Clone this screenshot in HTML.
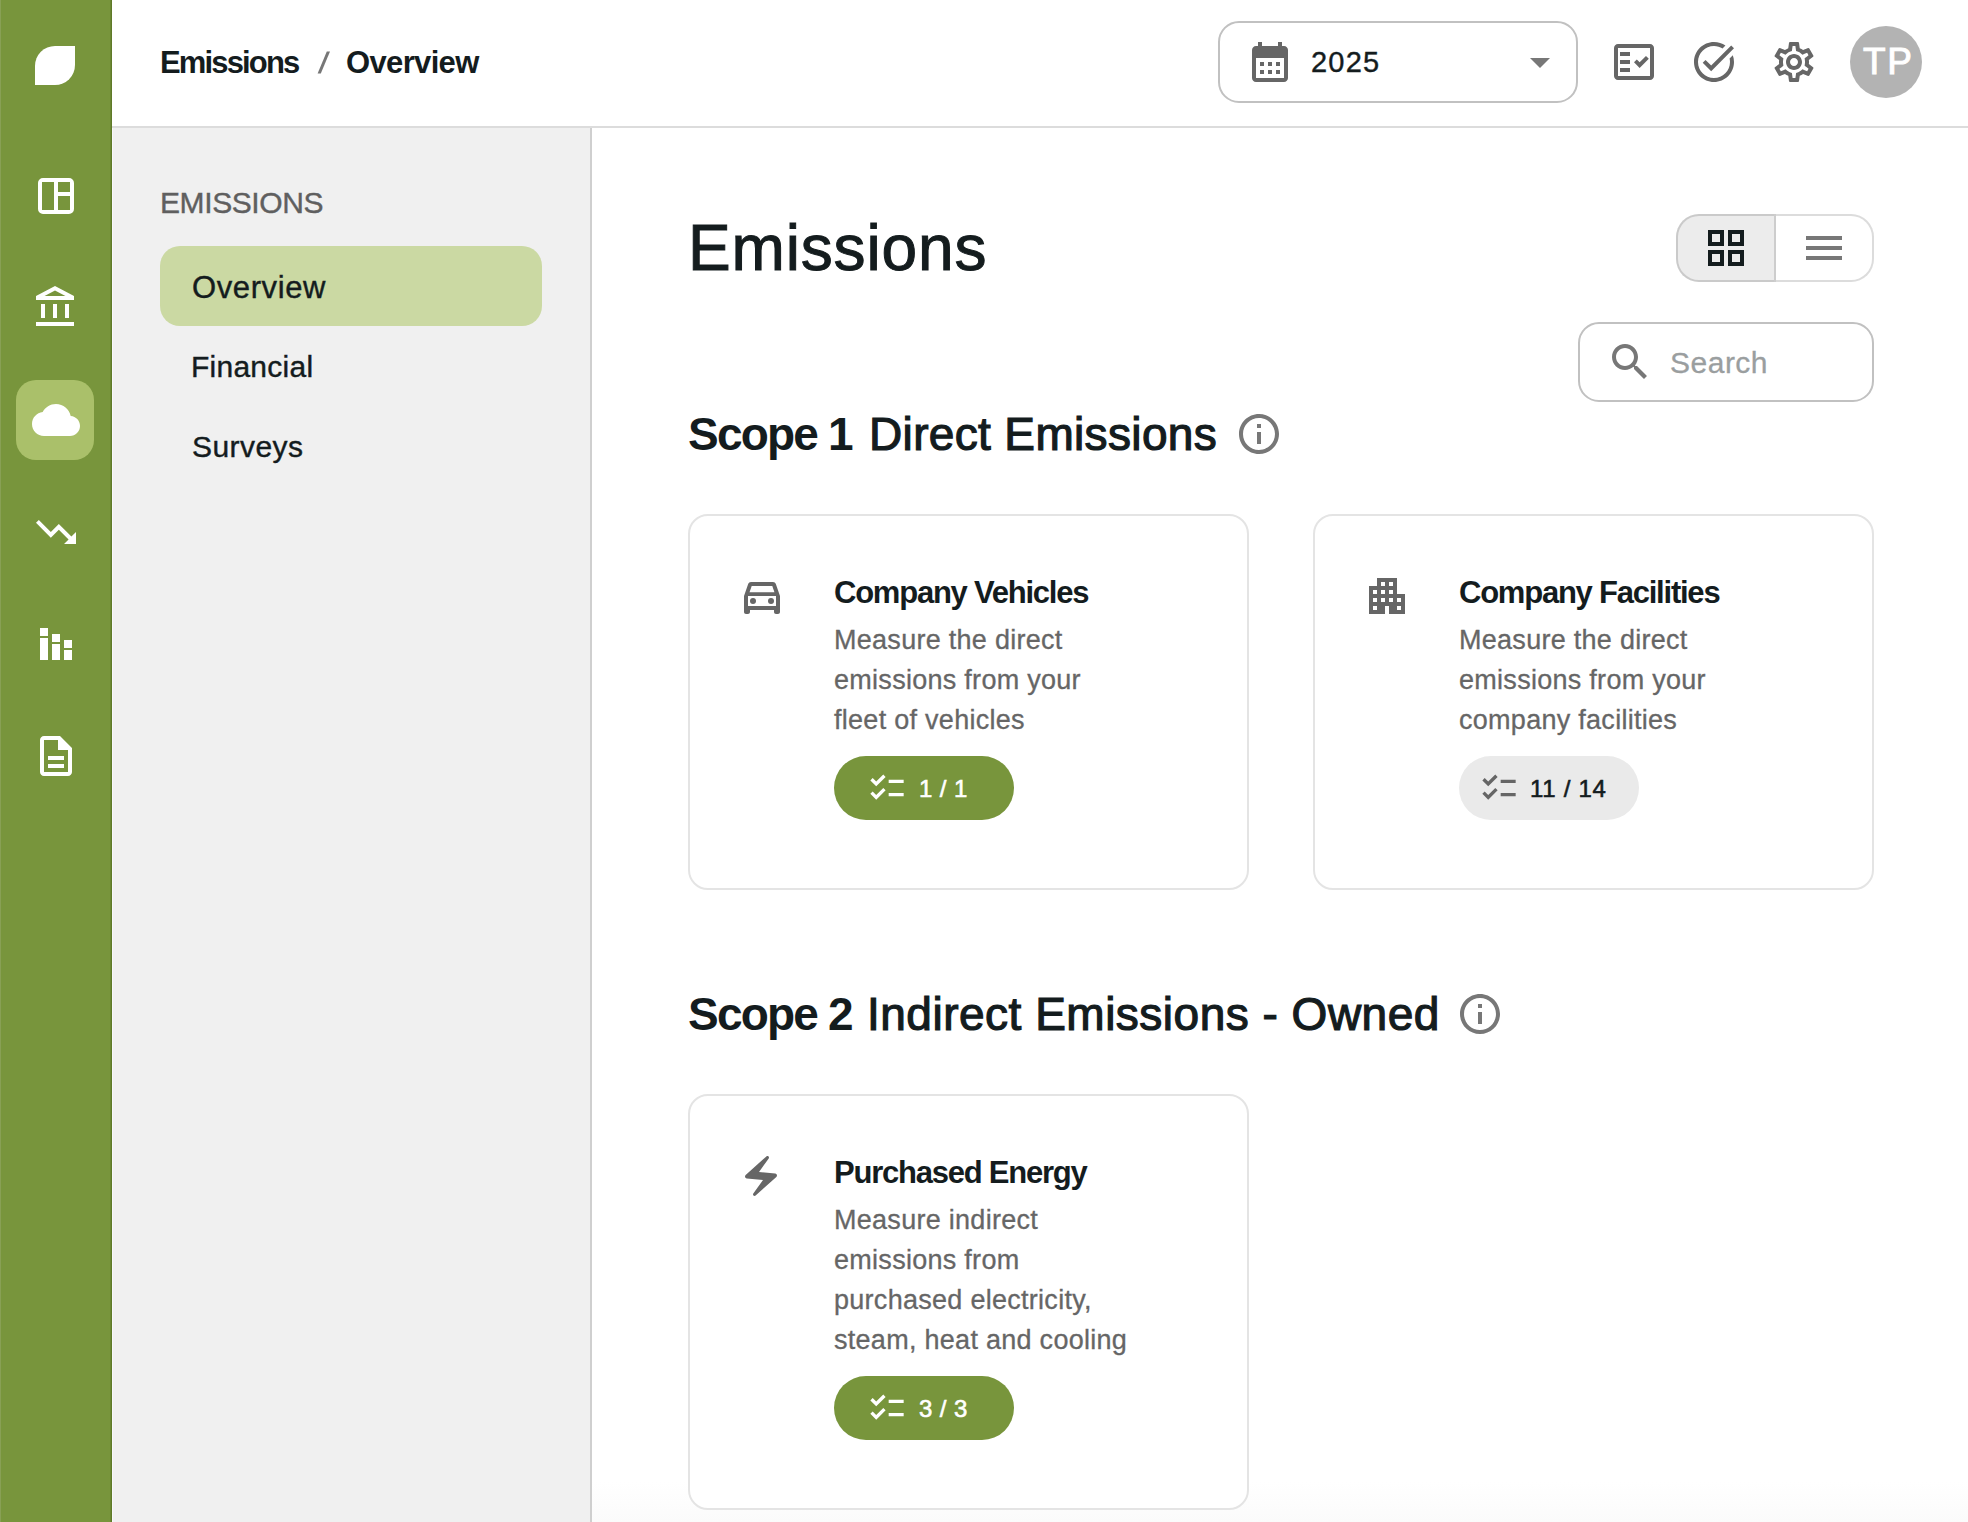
<!DOCTYPE html>
<html>
<head>
<meta charset="utf-8">
<style>
*{box-sizing:border-box;margin:0;padding:0}
html,body{width:1968px;height:1522px;overflow:hidden;background:#fff;font-family:"Liberation Sans",sans-serif;color:#141c1e}
.a{position:absolute}
.t{position:absolute;white-space:nowrap;line-height:1}
svg{position:absolute;display:block}
.rail{left:0;top:0;width:112px;height:1522px;background:#78953c}
.hdr{left:112px;top:0;width:1856px;height:128px;background:#fff;border-bottom:2px solid #dcdcdc}
.side{left:112px;top:128px;width:480px;height:1394px;background:#f0f0f0;border-right:2px solid #cfcfcf}
.card{position:absolute;width:561px;border:2px solid #e4e4e4;border-radius:20px;background:#fff}
.badge{position:absolute;width:180px;height:64px;border-radius:32px}
.g{background:#78953c}
.gr{background:#eaeaea}
</style>
</head>
<body>
<!-- left rail -->
<div class="a rail"></div>
<div class="a" style="left:0;top:0;width:1px;height:1522px;background:#88a055"></div>
<div class="a" style="left:110px;top:0;width:1px;height:1522px;background:#6c8834"></div>
<div class="a" style="left:111px;top:0;width:1px;height:1522px;background:#5f7a28"></div>
<div class="a" style="left:112px;top:128px;width:1px;height:1394px;background:#f8f8fb;z-index:1"></div>
<div class="a" style="left:35px;top:46px;width:40px;height:39px;background:#fff;border-radius:20px 0 20px 0"></div>
<!-- dashboard -->
<svg style="left:32px;top:172px" width="48" height="48" viewBox="0 0 24 24" fill="#fff"><path d="M5.5 3h13A2.5 2.5 0 0 1 21 5.5v13a2.5 2.5 0 0 1-2.5 2.5h-13A2.5 2.5 0 0 1 3 18.5v-13A2.5 2.5 0 0 1 5.5 3zM5 5v14h6V5H5zm8 0v5h6V5h-6zm0 7v7h6v-7h-6z"/></svg>
<!-- bank -->
<svg style="left:32px;top:284px" width="48" height="48" viewBox="0 0 24 24" fill="#fff"><path d="M6.5 10h-2v7h2v-7zm6 0h-2v7h2v-7zm8.5 9H2v2h19v-2zm-2.5-9h-2v7h2v-7zm-7-6.74L16.71 6H6.29l5.21-2.74m0-2.26L2 6v2h19V6l-9.5-5z"/></svg>
<!-- active cloud -->
<div class="a" style="left:16px;top:380px;width:78px;height:80px;border-radius:20px;background:#aac06a"></div>
<svg style="left:32px;top:396px" width="48" height="48" viewBox="0 0 24 24" fill="#fff"><path d="M19.35 10.04C18.67 6.59 15.64 4 12 4 9.11 4 6.6 5.64 5.35 8.04 2.34 8.36 0 10.91 0 14c0 3.31 2.69 6 6 6h13c2.76 0 5-2.240 5-5 0-2.64-2.05-4.78-4.65-4.96z"/></svg>
<!-- trending down -->
<svg style="left:32px;top:508px" width="48" height="48" viewBox="0 0 24 24" fill="#fff"><path d="M16 18l2.29-2.29-4.88-4.88-4 4L2 7.41 3.41 6l6 6 4-4 6.3 6.29L22 12v6z"/></svg>
<!-- bar chart -->
<svg style="left:0;top:600px" width="112" height="80" viewBox="0 600 112 80" fill="#fff"><path d="M40 628h8v8h-8zM40 638h8v22h-8zM52 634h8v8h-8zM52 644h8v16h-8zM64 640h8v8h-8zM64 650h8v10h-8z"/></svg>
<!-- doc -->
<svg style="left:32px;top:732px" width="48" height="48" viewBox="0 0 24 24" fill="#fff"><path d="M8 16h8v2H8zm0-4h8v2H8zm6-10H6c-1.1 0-2 .9-2 2v16c0 1.1.89 2 1.99 2H18c1.1 0 2-.9 2-2V8l-6-6zm4 18H6V4h7v5h5v11z"/></svg>

<!-- header -->
<div class="a hdr"></div>
<div class="t" id="bc1" style="left:160px;top:47px;font-size:31px;font-weight:700;letter-spacing:-1.85px">Emissions</div>
<svg style="left:310px;top:45px" width="30" height="34" viewBox="310 45 30 34" fill="#777"><path d="M317.6 73.4h3.2l9.2-22h-3.2z"/></svg>
<div class="t" id="bc2" style="left:346px;top:47px;font-size:31px;font-weight:700;letter-spacing:-0.65px">Overview</div>

<div class="a" style="left:1218px;top:21px;width:360px;height:82px;border:2px solid #c1c1c1;border-radius:21px"></div>
<svg style="left:1246px;top:38px" width="48" height="48" viewBox="0 0 24 24" fill="#666"><path d="M19 4h-1V2h-2v2H8V2H6v2H5c-1.11 0-1.99.9-1.99 2L3 20c0 1.1.89 2 2 2h14c1.1 0 2-.9 2-2V6c0-1.1-.9-2-2-2zm0 16H5V10h14v10zM9 14H7v-2h2v2zm4 0h-2v-2h2v2zm4 0h-2v-2h2v2zm-8 4H7v-2h2v2zm4 0h-2v-2h2v2zm4 0h-2v-2h2v2z"/></svg>
<div class="t" id="yr" style="left:1311px;top:48px;font-size:29px;letter-spacing:1.2px;-webkit-text-stroke-width:0.4px">2025</div>
<svg style="left:1526px;top:54px" width="28" height="18" viewBox="0 0 28 18" fill="#777"><path d="M4 4h20L14 14z"/></svg>

<svg style="left:1610px;top:38px" width="48" height="48" viewBox="0 0 24 24" fill="#666"><path d="M20,3H4C2.9,3,2,3.9,2,5v14c0,1.1,0.9,2,2,2h16c1.1,0,2-0.9,2-2V5C22,3.9,21.1,3,20,3z M20,19H4V5h16V19z"/><path d="M19.41 10.42 17.99 9 14.82 12.17 13.41 10.75 12 12.16 14.82 15z"/><path d="M5 7h5v2H5zM5 11h5v2H5zM5 15h5v2H5z"/></svg>
<svg style="left:1690px;top:38px" width="48" height="48" viewBox="0 0 24 24" fill="#666"><path d="M22,5.18L10.59,16.6l-4.24-4.24l1.41-1.41l2.83,2.83l10-10L22,5.18z M19.79,10.22C19.920,10.79,20,11.39,20,12c0,4.42-3.58,8-8,8s-8-3.58-8-8c0-4.42,3.58-8,8-8c1.58,0,3.04,0.46,4.28,1.25l1.44-1.44C16.1,2.67,14.13,2,12,2C6.48,2,2,6.48,2,12c0,5.52,4.48,10,10,10s10-4.48,10-10c0-1.19-0.22-2.33-0.6-3.39L19.79,10.22z"/></svg>
<svg style="left:1770px;top:38px" width="48" height="48" viewBox="0 0 24 24" fill="#666"><path d="M19.43 12.98c.04-.32.07-.64.07-.98 0-.34-.03-.66-.07-.98l2.11-1.65c.19-.15.24-.42.12-.64l-2-3.46c-.09-.16-.26-.25-.44-.25-.06 0-.12.01-.17.03l-2.49 1c-.52-.4-1.08-.73-1.690-.98l-.38-2.65C14.46 2.18 14.250 2 14 2h-4c-.25 0-.46.18-.49.42l-.38 2.65c-.61.25-1.17.59-1.69.98l-2.49-1c-.06-.02-.12-.03-.18-.03-.17 0-.34.09-.43.25l-2 3.46c-.13.22-.07.49.12.64l2.11 1.65c-.04.32-.07.65-.07.98 0 .33.03.66.07.98l-2.11 1.65c-.19.15-.24.42-.12.64l2 3.46c.09.16.26.25.44.25.06 0 .12-.01.17-.03l2.49-1c.52.4 1.08.73 1.69.98l.38 2.65c.03.24.24.42.49.42h4c.25 0 .46-.18.49-.42l.38-2.65c.61-.25 1.17-.59 1.69-.98l2.49 1c.06.02.12.03.18.03.17 0 .34-.09.43-.25l2-3.46c.12-.22.07-.49-.12-.64l-2.11-1.65zm-1.98-1.71c.04.31.05.52.05.73 0 .21-.02.43-.05.73l-.14 1.13.89.7 1.08.84-.7 1.21-1.27-.51-1.04-.42-.9.68c-.43.32-.84.56-1.25.73l-1.06.43-.16 1.13-.2 1.35h-1.4l-.19-1.35-.16-1.13-1.06-.43c-.43-.18-.83-.41-1.23-.71l-.91-.7-1.06.43-1.27.51-.7-1.21 1.08-.84.89-.7-.14-1.13c-.03-.31-.05-.54-.05-.74s.02-.43.05-.73l.14-1.13-.89-.7-1.08-.84.7-1.21 1.27.51 1.04.42.9-.68c.43-.32.84-.56 1.25-.73l1.06-.43.16-1.13.2-1.35h1.39l.19 1.35.16 1.13 1.06.43c.43.18.83.41 1.23.71l.91.7 1.06-.43 1.27-.51.7 1.21-1.07.85-.89.7.14 1.13zM12 8c-2.21 0-4 1.79-4 4s1.79 4 4 4 4-1.79 4-4-1.79-4-4-4zm0 6c-1.1 0-2-.9-2-2s.9-2 2-2 2 .9 2 2-.9 2-2 2z"/></svg>
<div class="a" style="left:1850px;top:26px;width:72px;height:72px;border-radius:50%;background:#b3b3b3"></div>
<div class="t" id="tp" style="left:1863px;top:43px;font-size:37px;color:#fff;-webkit-text-stroke-width:1px;letter-spacing:1.6px">TP</div>

<!-- secondary sidebar -->
<div class="a side"></div>
<div class="t" id="lbl" style="left:160px;top:188px;font-size:30px;color:#5f5f5f;letter-spacing:-0.4px;-webkit-text-stroke-width:0.4px">EMISSIONS</div>
<div class="a" style="left:160px;top:246px;width:382px;height:80px;border-radius:20px;background:#cbd9a3"></div>
<div class="t" id="n1" style="left:192px;top:272px;font-size:31px;letter-spacing:0.6px;-webkit-text-stroke-width:0.4px">Overview</div>
<div class="t" id="n2" style="left:191px;top:352px;font-size:30px;letter-spacing:0.25px;-webkit-text-stroke-width:0.4px">Financial</div>
<div class="t" id="n3" style="left:192px;top:432px;font-size:30px;letter-spacing:0.45px;-webkit-text-stroke-width:0.4px">Surveys</div>

<!-- main -->
<div class="a" style="left:592px;top:1482px;width:1376px;height:40px;background:linear-gradient(#fff,#fbfbfb)"></div>
<div class="t" id="h1" style="left:688px;top:216px;font-size:64px;letter-spacing:0.85px;-webkit-text-stroke-width:1.0px">Emissions</div>
<div class="a" style="left:1676px;top:214px;width:100px;height:68px;background:#ececec;border:2px solid #cacaca;border-right:none;border-radius:23px 0 0 23px"></div>
<div class="a" style="left:1776px;top:214px;width:98px;height:68px;background:#fff;border:2px solid #dcdcdc;border-left:none;border-radius:0 23px 23px 0"></div>
<div class="a" style="left:1774px;top:214px;width:2px;height:68px;background:#cdcdcd"></div>
<svg style="left:1702px;top:224px" width="48" height="48" viewBox="0 0 24 24" fill="#141c1e"><path d="M3 3v8h8V3H3zm6 6H5V5h4v4zm-6 4v8h8v-8H3zm6 6H5v-4h4v4zm4-16v8h8V3h-8zm6 6h-4V5h4v4zm-6 4v8h8v-8h-8zm6 6h-4v-4h4v4z"/></svg>
<svg style="left:1800px;top:224px" width="48" height="48" viewBox="0 0 24 24" fill="#777"><path d="M3 18h18v-2H3v2zm0-5h18v-2H3v2zm0-7v2h18V6H3z"/></svg>

<div class="a" style="left:1578px;top:322px;width:296px;height:80px;border:2px solid #c1c1c1;border-radius:21px"></div>
<svg style="left:1606px;top:338px" width="48" height="48" viewBox="0 0 24 24" fill="#777"><path d="M15.5 14h-.79l-.28-.27C15.41 12.59 16 11.11 16 9.5 16 5.91 13.09 3 9.5 3S3 5.910 3 9.5 5.91 16 9.5 16c1.61 0 3.09-.59 4.23-1.57l.27.28v.79l5 4.99L20.49 19l-4.99-5zm-6 0C7.01 14 5 11.99 5 9.5S7.01 5 9.5 5 14 7.01 14 9.5 11.99 14 9.5 14z"/></svg>
<div class="t" id="srch" style="left:1670px;top:348px;font-size:30px;color:#9a9e9f;letter-spacing:0.5px;-webkit-text-stroke-width:0.3px">Search</div>

<div class="t" id="s1a" style="left:688px;top:411px;font-size:46px;font-weight:700;letter-spacing:-1.8px">Scope 1</div>
<div class="t" id="s1b" style="left:869px;top:411px;font-size:46px;letter-spacing:0.35px;-webkit-text-stroke-width:1.2px">Direct Emissions</div>
<svg style="left:1235px;top:410px" width="48" height="48" viewBox="0 0 24 24" fill="#777"><path d="M11 7h2v2h-2zm0 4h2v6h-2zm1-9C6.48 2 2 6.48 2 12s4.48 10 10 10 10-4.48 10-10S17.52 2 12 2zm0 18c-4.41 0-8-3.59-8-8s3.59-8 8-8 8 3.59 8 8-3.59 8-8 8z"/></svg>

<!-- card 1 -->
<div class="card" style="left:688px;top:514px;height:376px"></div>
<svg style="left:738px;top:572px" width="48" height="48" viewBox="0 0 24 24" fill="#666"><path d="M18.92 6.01C18.72 5.42 18.16 5 17.5 5h-11c-.66 0-1.21.42-1.42 1.01L3 12v8c0 .55.45 1 1 1h1c.55 0 1-.45 1-1v-1h12v1c0 .55.45 1 1 1h1c.55 0 1-.45 1-1v-8l-2.08-5.99zM6.85 7h10.29l1.08 3.11H5.77L6.85 7zM19 17H5v-5h14v5z"/><circle cx="7.5" cy="14.5" r="1.5"/><circle cx="16.5" cy="14.5" r="1.5"/></svg>
<div class="t" id="c1t" style="left:834px;top:577px;font-size:31px;font-weight:700;letter-spacing:-1.23px">Company Vehicles</div>
<div class="t" id="c1d" style="left:834px;top:620px;font-size:27px;line-height:40px;color:#666;letter-spacing:0.28px;-webkit-text-stroke-width:0.3px">Measure the direct<br>emissions from your<br>fleet of vehicles</div>
<div class="badge g" style="left:834px;top:756px"></div>
<svg style="left:867px;top:768px" width="40" height="40" viewBox="0 0 24 24" fill="#fff"><path d="M22,7h-9v2h9V7z M22,15h-9v2h9V15z M5.54,11L2,7.46l1.41-1.41l2.12,2.12l4.24-4.24l1.41,1.41L5.54,11z M5.54,19L2,15.46l1.41-1.41l2.12,2.12l4.24-4.24l1.41,1.41L5.54,19z"/></svg>
<div class="t" id="b1" style="left:919px;top:777px;font-size:24px;color:#fff;letter-spacing:0.4px;-webkit-text-stroke-width:0.6px">1 / 1</div>

<!-- card 2 -->
<div class="card" style="left:1313px;top:514px;height:376px"></div>
<svg style="left:1363px;top:572px" width="48" height="48" viewBox="0 0 24 24" fill="#666"><path d="M17,11V3H7v4H3v14h8v-4h2v4h8V11H17z M7,19H5v-2h2V19z M7,15H5v-2h2V15z M7,11H5V9h2V11z M11,15H9v-2h2V15z M11,11H9V9h2V11z M11,7H9V5h2V7z M15,15h-2v-2h2V15z M15,11h-2V9h2V11z M15,7h-2V5h2V7z M19,19h-2v-2h2V19z M19,15h-2v-2h2V15z"/></svg>
<div class="t" id="c2t" style="left:1459px;top:577px;font-size:31px;font-weight:700;letter-spacing:-1.23px">Company Facilities</div>
<div class="t" id="c2d" style="left:1459px;top:620px;font-size:27px;line-height:40px;color:#666;letter-spacing:0.28px;-webkit-text-stroke-width:0.3px">Measure the direct<br>emissions from your<br>company facilities</div>
<div class="badge gr" style="left:1459px;top:756px"></div>
<svg style="left:1479px;top:768px" width="40" height="40" viewBox="0 0 24 24" fill="#666"><path d="M22,7h-9v2h9V7z M22,15h-9v2h9V15z M5.54,11L2,7.46l1.41-1.41l2.12,2.12l4.24-4.24l1.41,1.41L5.54,11z M5.54,19L2,15.46l1.41-1.41l2.12,2.12l4.24-4.24l1.41,1.41L5.54,19z"/></svg>
<div class="t" id="b2" style="left:1530px;top:777px;font-size:24px;color:#141c1e;letter-spacing:0.7px;-webkit-text-stroke-width:0.6px">11 / 14</div>

<div class="t" id="s2a" style="left:688px;top:991px;font-size:46px;font-weight:700;letter-spacing:-1.8px">Scope 2</div>
<div class="t" id="s2b" style="left:867px;top:991px;font-size:46px;letter-spacing:0.5px;-webkit-text-stroke-width:1.2px">Indirect Emissions - Owned</div>
<svg style="left:1456px;top:990px" width="48" height="48" viewBox="0 0 24 24" fill="#777"><path d="M11 7h2v2h-2zm0 4h2v6h-2zm1-9C6.48 2 2 6.48 2 12s4.48 10 10 10 10-4.48 10-10S17.52 2 12 2zm0 18c-4.41 0-8-3.59-8-8s3.59-8 8-8 8 3.59 8 8-3.59 8-8 8z"/></svg>

<!-- card 3 -->
<div class="card" style="left:688px;top:1094px;height:416px"></div>
<svg style="left:737px;top:1152px" width="48" height="48" viewBox="0 0 24 24" fill="#666"><path d="M14.69 2.21 4.33 11.49c-.64.58-.28 1.65.58 1.73L13 14l-4.85 6.76c-.22.31-.19.74.08 1.01.3.3.77.31 1.08.02l10.36-9.28c.64-.58.28-1.65-.58-1.73L11 10l4.85-6.76c.22-.31.19-.74-.08-1.01-.3-.3-.77-.31-1.08-.02z"/></svg>
<div class="t" id="c3t" style="left:834px;top:1157px;font-size:31px;font-weight:700;letter-spacing:-1.23px">Purchased Energy</div>
<div class="t" id="c3d" style="left:834px;top:1200px;font-size:27px;line-height:40px;color:#666;letter-spacing:0.28px;-webkit-text-stroke-width:0.3px">Measure indirect<br>emissions from<br>purchased electricity,<br>steam, heat and cooling</div>
<div class="badge g" style="left:834px;top:1376px"></div>
<svg style="left:867px;top:1388px" width="40" height="40" viewBox="0 0 24 24" fill="#fff"><path d="M22,7h-9v2h9V7z M22,15h-9v2h9V15z M5.54,11L2,7.46l1.41-1.41l2.12,2.12l4.24-4.24l1.41,1.41L5.54,11z M5.54,19L2,15.46l1.41-1.41l2.12,2.12l4.24-4.24l1.41,1.41L5.54,19z"/></svg>
<div class="t" id="b3" style="left:919px;top:1397px;font-size:24px;color:#fff;letter-spacing:0.4px;-webkit-text-stroke-width:0.6px">3 / 3</div>
</body>
</html>
